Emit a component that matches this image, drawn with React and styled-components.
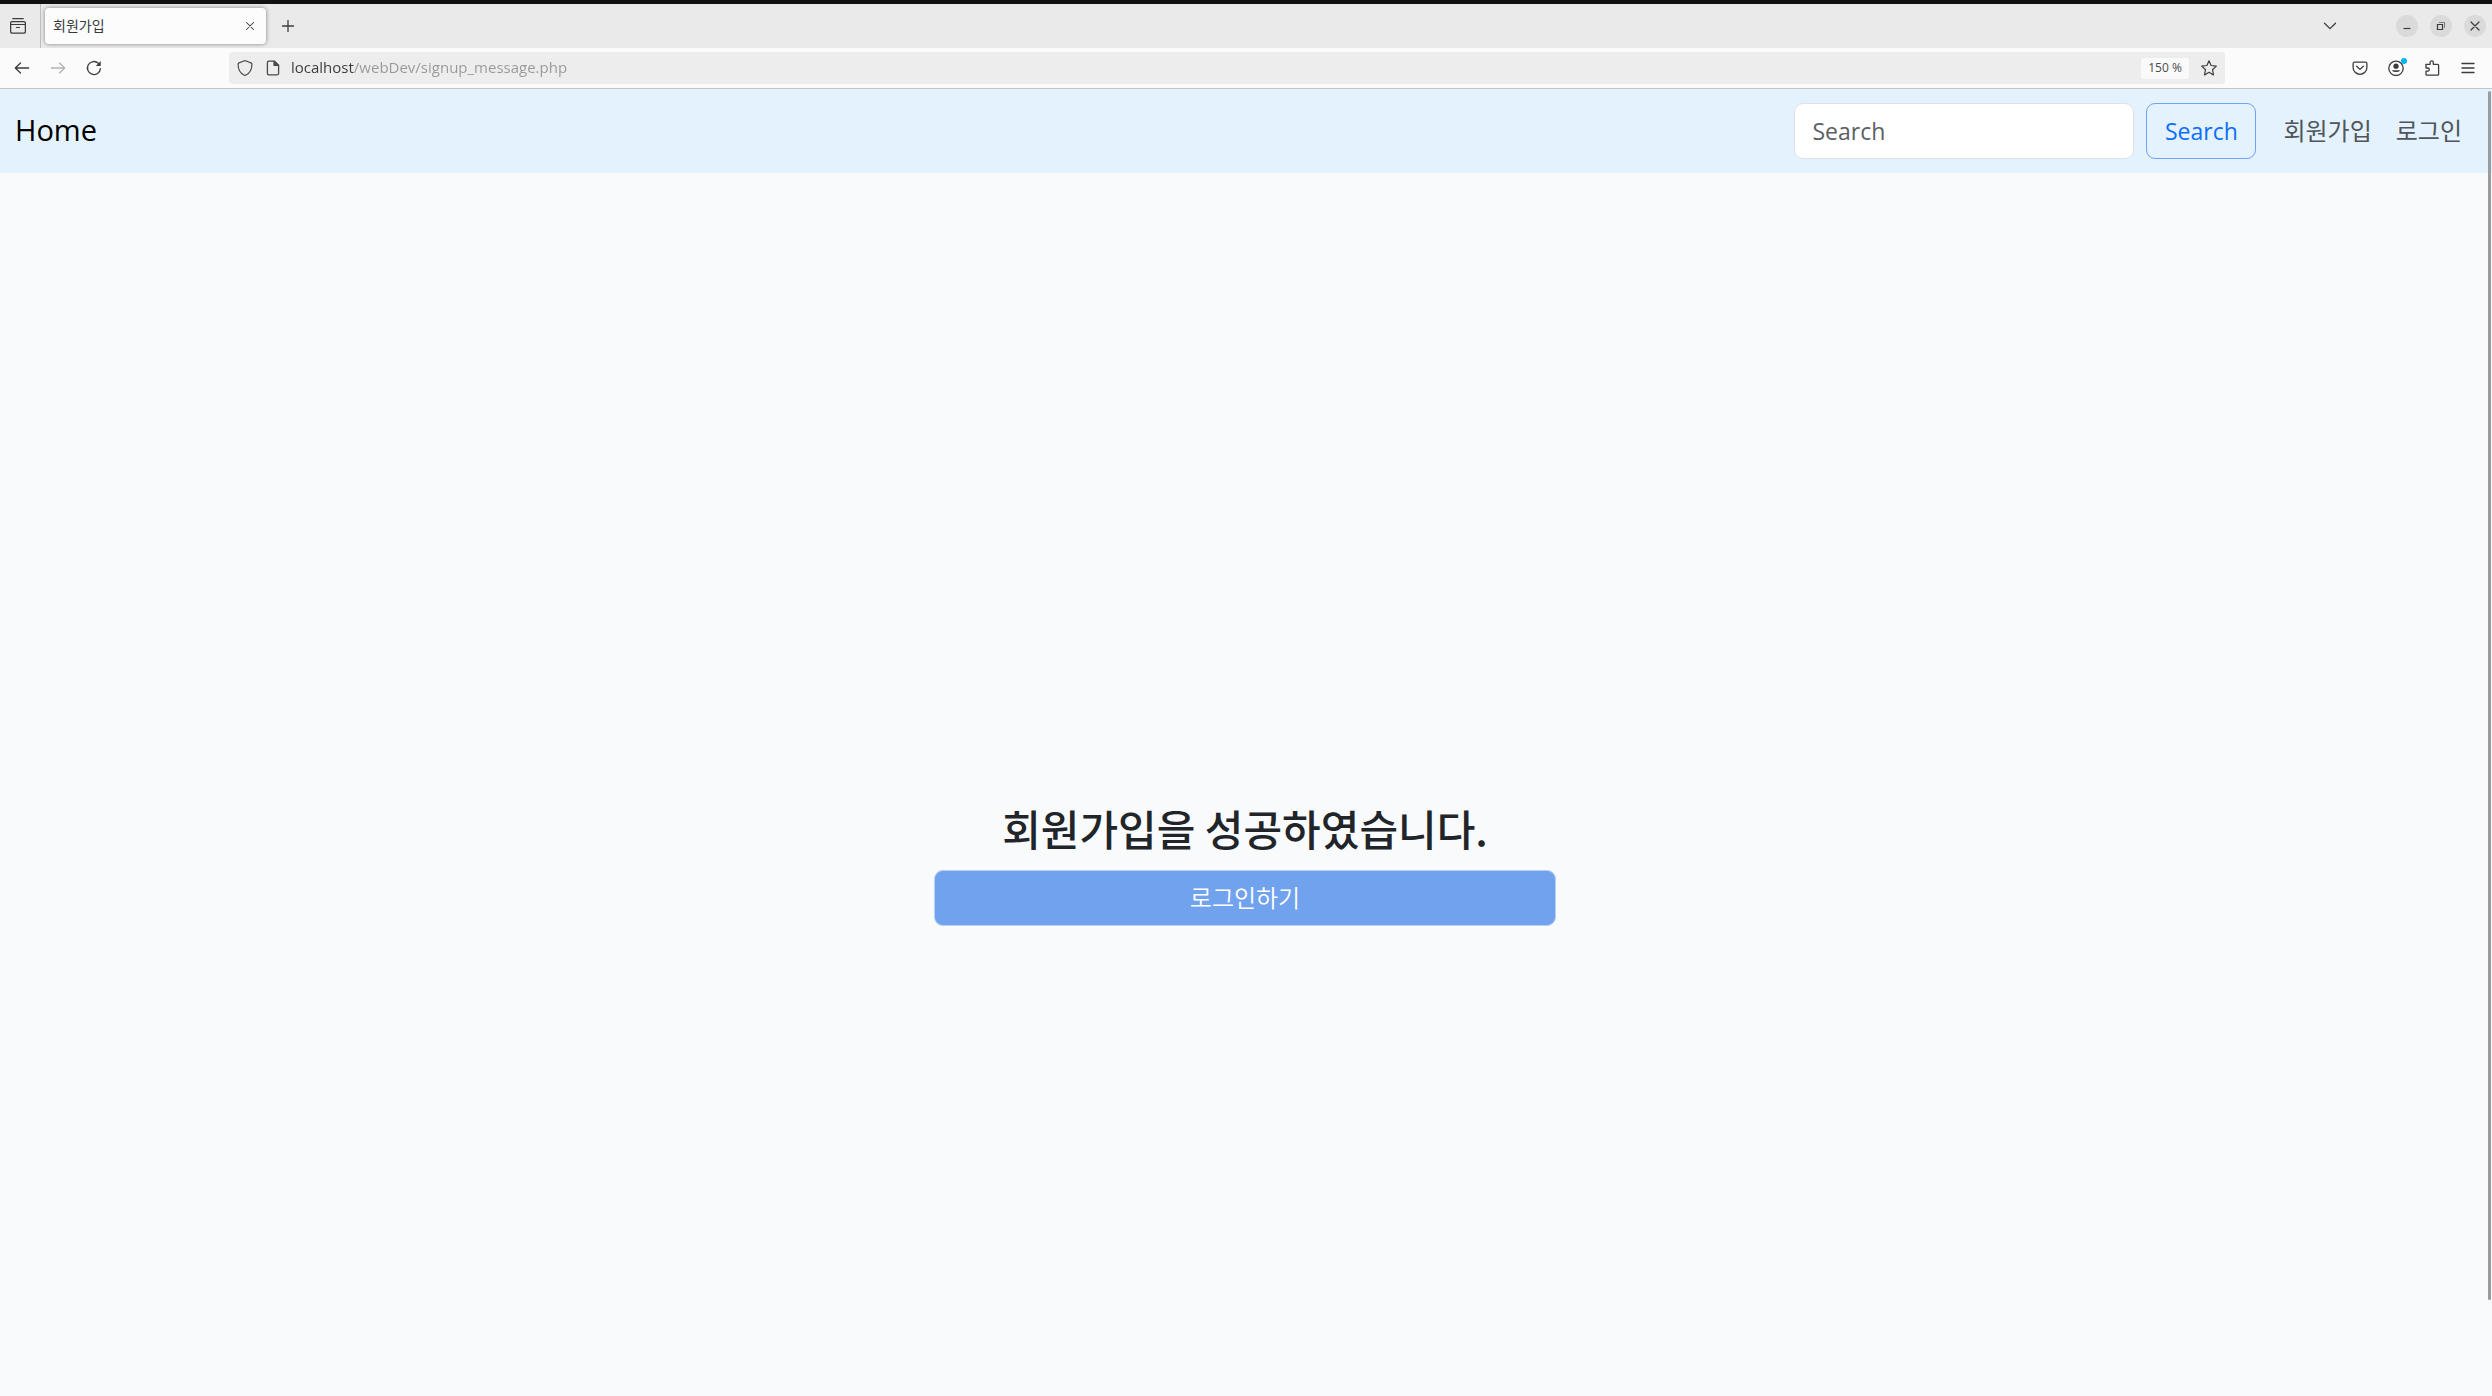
import React from "react";
import styled, { createGlobalStyle } from "styled-components";

const GlobalStyle = createGlobalStyle`
  * {
    box-sizing: border-box;
  }

  body {
    margin: 0;
    font-family: "Open Sans", "Noto Sans CJK KR", sans-serif;
  }

  button, input {
    font-family: inherit;
    margin: 0;
  }
`

const Icon = ({ size = 16, children }) => (
  <svg
    width={size}
    height={size}
    viewBox="0 0 16 16"
    fill="none"
    stroke="currentColor"
    strokeWidth="1.2"
    strokeLinecap="round"
    strokeLinejoin="round"
    aria-hidden="true"
  >
    {children}
  </svg>
)

const RecentIcon = () => (
  <Icon>
    <path d="M2.8 .7h10.4" />
    <path d="M2.2 3.6h11.6a1.6 1.6 0 0 1 1.6 1.6v8.4a1.6 1.6 0 0 1-1.6 1.6H2.2a1.6 1.6 0 0 1-1.6-1.6V5.2a1.6 1.6 0 0 1 1.6-1.6z" strokeWidth="1.3" />
    <path d="M.7 6.5h14.6M6.5 9.5h3" />
  </Icon>
)

const BackIcon = () => (
  <Icon><path d="M6.5 3 1.3 8l5.2 5M1.5 8H14.6" strokeWidth="1.3" /></Icon>
)

const ForwardIcon = () => (
  <Icon><path d="M9.5 3l5.2 5-5.2 5M14.5 8H1.4" strokeWidth="1.3" /></Icon>
)

const ReloadIcon = () => (
  <Icon>
    <path d="M14.4 8.6A6.5 6.5 0 1 1 12.3 3.2" strokeWidth="1.3" />
    <path d="M14.7 1v4.500a.5.5 0 0 1-.5.5H9.8z" fill="currentColor" stroke="none" />
  </Icon>
)

const ShieldIcon = () => (
  <Icon>
    <path d="M8 .6c.4 0 5 1.9 6 2.3.6.3.9.7.9 1.300 0 4-1.600 8.900-6.300 11-.4.200-.8.200-1.200 0C2.700 13.100 1.100 8.200 1.100 4.200c0-.6.3-1 .9-1.300C3 2.500 7.600.6 8 .6z" />
  </Icon>
)

const PageIcon = () => (
  <Icon>
    <path d="M9.5 1.2H3.8a1.4 1.4 0 0 0-1.4 1.4v10.8a1.4 1.4 0 0 0 1.4 1.4h8.4a1.4 1.4 0 0 0 1.4-1.4V5.3z" strokeWidth="1.3" />
    <path d="M9 1.2v4.3h4.6z" fill="currentColor" />
  </Icon>
)

const StarIcon = () => (
  <Icon>
    <path d="M8 .8l2.1 4.7 5.2.6-3.8 3.6 1 5.2L8 12.3l-4.5 2.6 1-5.2L.7 6.1l5.2-.6z" />
  </Icon>
)

const PocketIcon = () => (
  <Icon>
    <path d="M2.6 2.2h10.8a1.5 1.5 0 0 1 1.5 1.5v3.7a6.9 6.9 0 0 1-13.8 0V3.7a1.5 1.5 0 0 1 1.5-1.5z" strokeWidth="1.3" />
    <path d="M4.6 6.2 8 9.4l3.4-3.2" strokeWidth="1.3" />
  </Icon>
)

const AccountIcon = () => (
  <Icon>
    <circle cx="8" cy="8.3" r="7.2" strokeWidth="1.3" />
    <circle cx="8" cy="6.2" r="2.6" fill="currentColor" stroke="none" />
    <path d="M3.7 10.2h8.6a4.7 3.2 0 0 1-8.6 0z" fill="currentColor" stroke="none" />
  </Icon>
)

const PuzzleIcon = () => (
  <Icon>
    <path d="M1.9 4.3h4.2V2.5a1.6 1.6 0 0 1 3.2 0v1.8h4.4a.9.9 0 0 1 .9.9v9.1a.9.9 0 0 1-.9.9H2.9a.9.9 0 0 1-.9-.9v-3.1h1.7a1.6 1.6 0 0 0 0-3.2H2V4.9z" strokeWidth="1.3" />
  </Icon>
)

const MenuIcon = () => (
  <Icon><path d="M2 3.5h12M2 8h12M2 12.5h12" strokeWidth="1.3" /></Icon>
)

const CloseIcon = ({ size }) => (
  <Icon size={size}><path d="M4 4l8 8M12 4l-8 8" /></Icon>
)

const PlusIcon = () => (
  <Icon><path d="M8 2.5v11M2.5 8h11" strokeWidth="1.3" /></Icon>
)

const ChevronIcon = () => (
  <Icon><path d="M2.5 5.2 8 10.6l5.5-5.4" strokeWidth="1.3" /></Icon>
)

const MinimizeIcon = () => (
  <Icon><path d="M4.5 10.5h7" strokeLinecap="butt" /></Icon>
)

const RestoreIcon = () => (
  <Icon>
    <path d="M4.5 6.5h5v5h-5z" strokeLinejoin="miter" />
    <path d="M6.5 4.5h5v5" strokeWidth="1" opacity=".6" />
  </Icon>
)

const Browser = () => (
  <header>
    <TabStrip>
      <RecentButton aria-label="Recent browsing"><RecentIcon /></RecentButton>
      <Tab>
        <span>회원가입</span>
        <TabClose aria-label="Close tab"><CloseIcon size={14} /></TabClose>
      </Tab>
      <IconButton aria-label="New tab"><PlusIcon /></IconButton>
      <WindowControls>
        <ListTabs aria-label="List all tabs"><ChevronIcon /></ListTabs>
        <WindowButton aria-label="Minimize"><MinimizeIcon /></WindowButton>
        <WindowButton aria-label="Restore"><RestoreIcon /></WindowButton>
        <WindowButton aria-label="Close"><CloseIcon /></WindowButton>
      </WindowControls>
    </TabStrip>
    <Toolbar>
      <IconButton aria-label="Back"><BackIcon /></IconButton>
      <IconButton aria-label="Forward" disabled><ForwardIcon /></IconButton>
      <IconButton aria-label="Reload"><ReloadIcon /></IconButton>
      <UrlBar>
        <ShieldIcon />
        <PageIcon />
        <UrlInput aria-label="Address" defaultValue="localhost/webDev/signup_message.php" spellCheck="false" />
        <ZoomButton>150 %</ZoomButton>
        <StarButton aria-label="Bookmark this page"><StarIcon /></StarButton>
      </UrlBar>
      <IconButton aria-label="Save to Pocket"><PocketIcon /></IconButton>
      <IconButton aria-label="Account"><AccountIcon /><Badge /></IconButton>
      <IconButton aria-label="Extensions"><PuzzleIcon /></IconButton>
      <IconButton aria-label="Menu"><MenuIcon /></IconButton>
    </Toolbar>
  </header>
)

class App extends React.Component {
  constructor(props) {
    super(props);

    this.state = {
      query: '',
    };
  }

  handleChange = (e) => {
    this.setState({ query: e.target.value });
  }

  handleSubmit = (e) => {
    e.preventDefault();
  }

  render() {
    const { query } = this.state;

    return (
      <Window>
        <GlobalStyle />
        <Browser />
        <Page>
          <Navbar>
            <Brand href="#home">Home</Brand>
            <SearchForm role="search" onSubmit={this.handleSubmit}>
              <SearchInput
                type="search"
                placeholder="Search"
                aria-label="Search"
                value={query}
                onChange={this.handleChange}
              />
              <SearchButton type="submit">Search</SearchButton>
            </SearchForm>
            <NavLinks>
              <a href="#signup">회원가입</a>
              <a href="#login">로그인</a>
            </NavLinks>
          </Navbar>
          <Message>
            <h1>회원가입을 성공하였습니다.</h1>
            <LoginButton type="button">로그인하기</LoginButton>
          </Message>
          <Scrollbar />
        </Page>
      </Window>
    );
  }
}

const Window = styled.div`
  display: flex;
  flex-direction: column;
  min-height: 100vh;
  border-top: 4px solid #111;
`

const TabStrip = styled.div`
  display: flex;
  align-items: center;
  height: 44px;
  background: #eaeaea;
  color: #38383d;
`

const IconButton = styled.button`
  position: relative;
  display: flex;
  align-items: center;
  justify-content: center;
  width: 36px;
  height: 32px;
  padding: 0;
  border: 0;
  background: none;
  color: #3c3c40;

  &:disabled {
    color: #b4b4b5;
  }
`

const RecentButton = styled(IconButton)`
  width: 41px;
  height: 100%;
  padding-right: 4px;
  border-right: 1px solid #bdbdbd;
`

const Tab = styled.div`
  display: flex;
  align-items: center;
  justify-content: space-between;
  width: 221px;
  height: 36px;
  margin: 0 4px;
  padding: 0 4px 0 8px;
  border-radius: 4px;
  background: #fcfcfc;
  box-shadow: 0 0 4px rgba(0, 0, 0, 0.45);
  font-size: 14px;
  line-height: 20px;
`

const TabClose = styled(IconButton)`
  width: 24px;
  height: 24px;
`

const WindowControls = styled.div`
  display: flex;
  align-items: center;
  gap: 12px;
  margin-left: auto;
  padding-right: 6px;
`

const ListTabs = styled(IconButton)`
  margin-right: 36px;
`

const WindowButton = styled(IconButton)`
  width: 22px;
  height: 22px;
  border-radius: 50%;
  background: #dadada;
`

const Toolbar = styled.div`
  display: flex;
  align-items: center;
  height: 41px;
  padding: 0 6px 0 4px;
  border-bottom: 1px solid #c4c6c8;
  background: #fbfbfb;
`

const UrlBar = styled.div`
  display: flex;
  flex: 1;
  align-items: center;
  gap: 12px;
  height: 32px;
  margin: 0 117px;
  padding: 0 8px;
  border-radius: 4px;
  background: #ededed;
  color: #4a4a4e;
`

// host part is dark, the path after it is greyed out
const UrlInput = styled.input`
  flex: 1;
  height: 24px;
  margin-left: -2px;
  padding: 0 0 2px;
  border: 0;
  outline: 0;
  background: linear-gradient(to right, #3a3a3e 63px, #98989b 63px);
  background-clip: text;
  -webkit-background-clip: text;
  color: transparent;
  font-size: 15px;
  line-height: 20px;
`

const ZoomButton = styled.button`
  width: 48px;
  height: 21px;
  padding: 0;
  border: 0;
  border-radius: 3px;
  background: #fafafa;
  color: #4a4a4e;
  font-size: 12px;
  line-height: 20px;
`

const StarButton = styled(IconButton)`
  width: 16px;
`

const Badge = styled.span`
  position: absolute;
  top: 6px;
  right: 7px;
  width: 6px;
  height: 6px;
  border-radius: 50%;
  background: #00b3f4;
`

const Page = styled.div`
  position: relative;
  display: flex;
  flex: 1;
  flex-direction: column;
  background: #f8fafc;
`

const Navbar = styled.nav`
  display: flex;
  align-items: center;
  height: 84px;
  padding: 0 30px 0 15px;
  background: #e3f2fd;
  font-size: 23px;
`

const Brand = styled.a`
  margin-right: auto;
  padding-bottom: 2px;
  color: #000;
  font-size: 29px;
  line-height: 44px;
  text-decoration: none;
`

const SearchForm = styled.form`
  display: flex;
  gap: 12px;
`

const SearchInput = styled.input`
  width: 340px;
  height: 56px;
  padding: 0 17px;
  border: 1px solid #dee2e6;
  border-radius: 9px;
  background: #fff;
  font-size: inherit;
  appearance: none;

  &::placeholder {
    color: #5b6064;
    opacity: 1;
  }
`

const SearchButton = styled.button`
  width: 110px;
  height: 56px;
  padding: 0;
  border: 1px solid #6da2f5;
  border-radius: 9px;
  background: transparent;
  color: #0d6efd;
  font-size: inherit;
`

const NavLinks = styled.div`
  display: flex;
  gap: 24px;
  margin-left: 27px;
  padding-bottom: 3px;
  font-size: 24px;

  a {
    color: #4f555a;
    text-decoration: none;
  }
`

const Message = styled.main`
  display: flex;
  flex: 1;
  flex-direction: column;
  align-items: center;
  justify-content: center;
  padding: 160px 2px 0 0;

  h1 {
    margin: 0 0 18px;
    color: #212529;
    font: 500 42px/48px "Noto Sans CJK KR", sans-serif;
  }
`

const LoginButton = styled.button`
  width: 25%;
  height: 56px;
  padding: 0 0 3px;
  border: 1px solid #b7d0f6;
  border-radius: 9px;
  background: #71a2ee;
  color: #fff;
  font-size: 24px;
  font-weight: 350;
`

const Scrollbar = styled.div`
  position: absolute;
  top: 2px;
  right: 1px;
  width: 3px;
  height: 92.5%;
  border-radius: 2px;
  background: #999c9f;
`

export default App;
